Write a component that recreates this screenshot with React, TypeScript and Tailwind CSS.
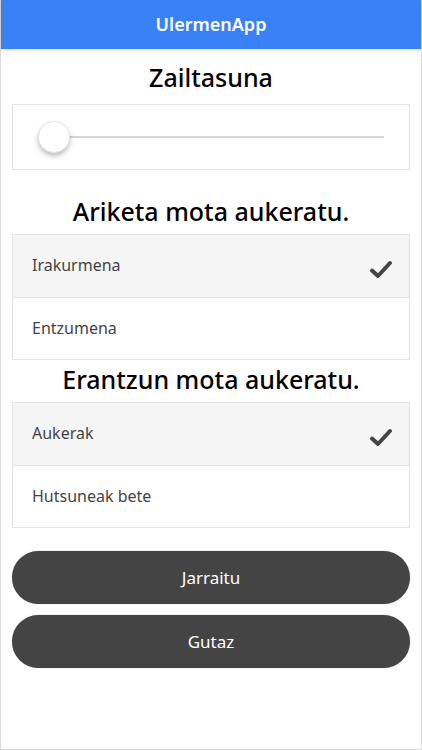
import { useState } from 'react';

const font = { fontFamily: '"Noto Sans", "Open Sans", sans-serif' };

const CheckIcon = () => (
  <svg width="24" height="24" viewBox="0 0 24 24" className="text-[#444]">
    <path d="M3 13.5 L9 19 L21 6" fill="none" stroke="currentColor" strokeWidth="4" strokeLinecap="round" strokeLinejoin="round" />
  </svg>
);

type OptionListProps = {
  options: string[];
  selected: number;
  onSelect: (i: number) => void;
};

const OptionList = ({ options, selected, onSelect }: OptionListProps) => (
  <div className="mx-[11px] border border-[#e3e3e3]">
    {options.map((opt, i) => (
      <button
        key={opt}
        onClick={() => onSelect(i)}
        className={`flex h-[62px] w-full items-center justify-between pl-[19px] pr-[16px] text-left text-[16px] text-[#444] ${
          i > 0 ? 'border-t border-[#e3e3e3]' : ''
        } ${i === selected ? 'bg-[#f5f5f5]' : 'bg-white'}`}
      >
        <span className="-mt-[2px]">{opt}</span>
        {i === selected && <span className="mt-[5px]"><CheckIcon /></span>}
      </button>
    ))}
  </div>
);

const App = () => {
  const [level, setLevel] = useState(0);
  const [exercise, setExercise] = useState(0);
  const [answer, setAnswer] = useState(0);

  return (
    <div className="flex min-h-[750px] w-full flex-col border-x border-b border-[#dcdcdc] bg-white" style={font}>
      <header className="flex h-[49px] items-center justify-center bg-[#3a80f6] shadow-[0_1px_3px_rgba(0,0,0,0.15)]">
        <h1 className="text-[18px] font-semibold text-white">UlermenApp</h1>
      </header>

      <h2 className="mt-[10px] text-center text-[25px] font-medium leading-[36px] text-black">Zailtasuna</h2>

      <div className="mx-[11px] mt-[9px] flex h-[66px] items-center border border-[#e3e3e3] px-[25px]">
        <div className="relative h-[2px] w-full bg-[#d6d6d6]">
          <div
            className="absolute top-1/2 h-[32px] w-[32px] -translate-x-1/2 -translate-y-1/2 rounded-full border border-[#e5e5e5] bg-white shadow-[0_3px_5px_rgba(0,0,0,0.25)]"
            style={{ left: `calc(${level * 10}% + 16px)` }}
            onClick={() => setLevel((level + 1) % 11)}
          />
        </div>
      </div>

      <h2 className="mb-[5px] mt-[23px] text-center text-[25px] font-medium leading-[36px] text-black">Ariketa mota aukeratu.</h2>
      <OptionList options={['Irakurmena', 'Entzumena']} selected={exercise} onSelect={setExercise} />

      <h2 className="mb-[5px] mt-[1px] text-center text-[25px] font-medium leading-[36px] text-black">Erantzun mota aukeratu.</h2>
      <OptionList options={['Aukerak', 'Hutsuneak bete']} selected={answer} onSelect={setAnswer} />

      <div className="mx-[11px] mt-[23px] flex flex-col gap-[11px]">
        <button className="h-[53px] w-full rounded-full bg-[#444] text-[17px] text-white shadow-[0_0_1px_rgba(0,0,0,0.4)]">
          Jarraitu
        </button>
        <button className="h-[53px] w-full rounded-full bg-[#444] text-[17px] text-white shadow-[0_0_1px_rgba(0,0,0,0.4)]">
          Gutaz
        </button>
      </div>
    </div>
  );
};

export default App;
